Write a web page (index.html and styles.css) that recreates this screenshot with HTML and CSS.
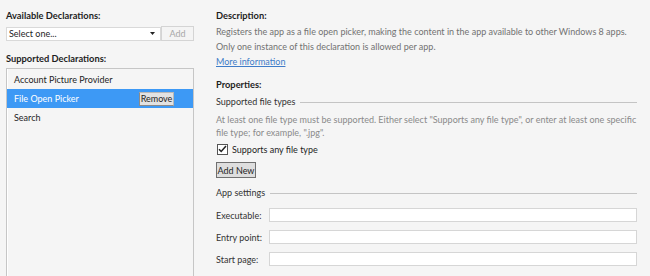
FILE: index.html
```html
<!DOCTYPE html>
<html lang="en">
<head>
    <meta charset="UTF-8">
    <meta name="viewport" content="width=device-width, initial-scale=1.0">
    <title>Declarations - Package Manifest</title>
    <link rel="stylesheet" href="styles.css">
</head>
<body>
    <div class="page">
        <!-- Left: declaration picker and list -->
        <aside class="declarations">
            <h3>Available Declarations:</h3>
            <div class="picker-row">
                <div class="select-box">
                    <span>Select one...</span>
                    <svg class="arrow" width="5" height="3" viewBox="0 0 5 3"><path d="M0 0h5L2.5 3z" fill="#222"/></svg>
                </div>
                <button class="btn btn-disabled" disabled>Add</button>
            </div>

            <h3 class="supported-title">Supported Declarations:</h3>
            <ul class="decl-list">
                <li>Account Picture Provider</li>
                <li class="selected">File Open Picker <button class="btn btn-remove">Remove</button></li>
                <li>Search</li>
            </ul>
        </aside>

        <!-- Right: details of the selected declaration -->
        <main class="details">
            <h3>Description:</h3>
            <p class="desc">Registers the app as a file open picker, making the content in the app available to other Windows 8 apps.<br>Only one instance of this declaration is allowed per app.</p>
            <a href="#" class="more-link">More information</a>

            <h3 class="props-title">Properties:</h3>
            <div class="group-title">Supported file types</div>
            <p class="hint">At least one file type must be supported. Either select "Supports any file type", or enter at least one specific file type; for example, ".jpg".</p>

            <label class="check-row">
                <span class="check-box">
                    <svg width="9" height="8" viewBox="0 0 9 8"><path d="M1 4.2l2.2 2.3L8 1" fill="none" stroke="#222" stroke-width="1.5"/></svg>
                </span>
                Supports any file type
            </label>

            <button class="btn btn-add-new">Add New</button>

            <div class="group-title app-title">App settings</div>
            <div class="field-row">
                <label for="exe">Executable:</label>
                <input type="text" id="exe">
            </div>
            <div class="field-row">
                <label for="entry">Entry point:</label>
                <input type="text" id="entry">
            </div>
            <div class="field-row">
                <label for="start">Start page:</label>
                <input type="text" id="start">
            </div>
        </main>
    </div>
</body>
</html>
```

FILE: styles.css
```css
/* Global Styles */
body {
    margin: 0;
    padding: 0;
    background-color: #f5f5f5;
    color: #1e1e1e;
    font-family: 'Lato', 'Noto Sans', sans-serif;
    font-size: 9px;
    overflow: hidden;
}

h3 {
    margin: 0;
    font-size: 9.3px;
    font-weight: bold;
    line-height: 14px;
}

.page {
    display: flex;
    height: 276px;
}

/* Buttons */
.btn {
    font-family: inherit;
    font-size: 9px;
    padding: 0;
    line-height: 1;
    white-space: nowrap;
    cursor: pointer;
}

.btn-disabled {
    width: 33px;
    height: 15px;
    background-color: #f4f4f4;
    border: 1px solid #d4d4d4;
    color: #a8a8a8;
    cursor: default;
}

.btn-remove {
    width: 35px;
    height: 14px;
    margin-right: 19px;
    background-color: #e2e2e2;
    border: 1px solid #8a8a8a;
    border-top-color: #b8b8b8;
    border-right-color: #b8b8b8;
    color: #1e1e1e;
}

.btn-add-new {
    display: block;
    width: 40px;
    height: 16px;
    margin-top: 6px;
    background-color: #dedede;
    border: 1px solid #707070;
    color: #1e1e1e;
}

/* Left column */
.declarations {
    width: 188px;
    margin-left: 6px;
    padding-top: 9px;
    display: flex;
    flex-direction: column;
}

.picker-row {
    display: flex;
    align-items: center;
    justify-content: space-between;
    margin-top: 3px;
}

.select-box {
    height: 12px;
    width: 146px;
    background-color: #fff;
    border: 1px solid #d9d9d9;
    display: flex;
    align-items: center;
    justify-content: space-between;
    padding: 0 5px 0 2px;
}

.supported-title {
    margin-top: 11px;
}

.decl-list {
    list-style: none;
    margin: 2px 0 0;
    padding: 1px 0 0;
    flex: 1;
    border: 1px solid #c6c6c6;
    border-bottom: none;
    box-shadow: inset 1px 0 0 #fff;
}

.decl-list li {
    height: 19px;
    line-height: 19px;
    padding-left: 7px;
    display: flex;
    align-items: center;
    justify-content: space-between;
}

.decl-list li.selected {
    background-color: #3d99f5;
    color: #fff;
}

/* Right column */
.details {
    width: 421px;
    margin-left: 22px;
    padding-top: 9px;
}

.desc {
    margin: 1px 0 0;
    line-height: 15px;
    color: #727272;
}

.more-link {
    display: block;
    width: max-content;
    line-height: 15px;
    color: #3f7cc8;
    text-decoration: underline;
}

.props-title {
    margin-top: 9px;
}

.group-title {
    display: flex;
    align-items: center;
    line-height: 14px;
    margin-top: 3px;
    color: #333;
}

.group-title::after {
    content: "";
    flex: 1;
    margin-left: 5px;
    border-top: 1px solid #c4c4c4;
}

.hint {
    margin: 4px -6px 0 0;
    line-height: 13px;
    color: #8a8a8a;
}

.check-row {
    display: flex;
    align-items: center;
    gap: 4px;
    height: 14px;
    margin-top: 3px;
    color: #1e1e1e;
}

.check-box {
    width: 9px;
    height: 9px;
    margin-left: 1px;
    border: 1px solid #555;
    background-color: #fff;
    display: flex;
    align-items: center;
    justify-content: center;
}

.app-title {
    margin-top: 8px;
}

.field-row {
    display: flex;
    align-items: center;
    margin-top: 8px;
    color: #333;
}

.field-row label {
    width: 53px;
}

.field-row input {
    flex: 1;
    height: 14px;
    box-sizing: border-box;
    background-color: #fff;
    border: 1px solid #d6d6d6;
    padding: 0;
    margin: 0;
}
```
